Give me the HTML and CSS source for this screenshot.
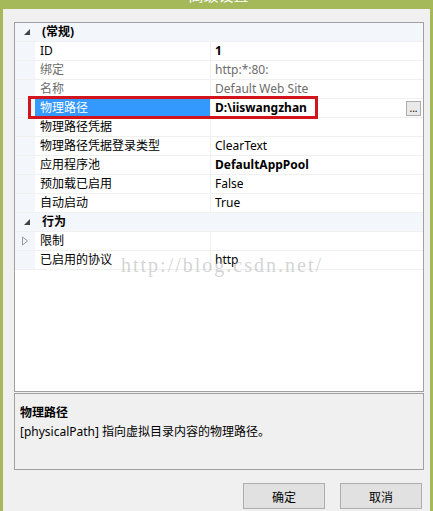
FILE: index.html
```html
<!DOCTYPE html>
<html lang="zh-CN">
<head>
    <meta charset="UTF-8">
    <title>高级设置</title>
    <link rel="stylesheet" href="styles.css">
</head>
<body>
    <div class="titlebar"><span class="title">高级设置</span></div>

    <div class="dialog">
        <div class="grid">
            <div class="row category">
                <span class="gutter"><svg width="8" height="8" viewBox="0 0 8 8"><path d="M7 1 L7 7 L1 7 Z" fill="#444"/></svg></span>
                <span class="name">(常规)</span>
            </div>
            <div class="row">
                <span class="gutter"></span><span class="name">ID</span><span class="value bold">1</span>
            </div>
            <div class="row disabled">
                <span class="gutter"></span><span class="name">绑定</span><span class="value">http:*:80:</span>
            </div>
            <div class="row disabled">
                <span class="gutter"></span><span class="name">名称</span><span class="value">Default Web Site</span>
            </div>
            <div class="row selected">
                <span class="gutter"></span><span class="name">物理路径</span>
                <span class="value bold">D:\iiswangzhan<button class="dots">...</button></span>
            </div>
            <div class="row">
                <span class="gutter"></span><span class="name">物理路径凭据</span><span class="value"></span>
            </div>
            <div class="row">
                <span class="gutter"></span><span class="name">物理路径凭据登录类型</span><span class="value">ClearText</span>
            </div>
            <div class="row">
                <span class="gutter"></span><span class="name">应用程序池</span><span class="value bold">DefaultAppPool</span>
            </div>
            <div class="row">
                <span class="gutter"></span><span class="name">预加载已启用</span><span class="value">False</span>
            </div>
            <div class="row">
                <span class="gutter"></span><span class="name">自动启动</span><span class="value">True</span>
            </div>
            <div class="row category">
                <span class="gutter"><svg width="8" height="8" viewBox="0 0 8 8"><path d="M7 1 L7 7 L1 7 Z" fill="#444"/></svg></span>
                <span class="name">行为</span>
            </div>
            <div class="row">
                <span class="gutter"><svg width="8" height="10" viewBox="0 0 8 10"><path d="M1.5 1 L6.5 5 L1.5 9 Z" fill="none" stroke="#999"/></svg></span>
                <span class="name">限制</span><span class="value"></span>
            </div>
            <div class="row">
                <span class="gutter"></span><span class="name">已启用的协议</span><span class="value">http</span>
            </div>

            <!-- annotation over the selected row -->
            <div class="highlight"></div>
            <div class="watermark">http://blog.csdn.net/</div>
        </div>

        <div class="description">
            <div class="desc-title">物理路径</div>
            <div class="desc-text">[physicalPath] 指向虚拟目录内容的物理路径。</div>
        </div>

        <div class="actions">
            <button class="btn">确定</button>
            <button class="btn">取消</button>
        </div>
    </div>
</body>
</html>
```

FILE: styles.css
```css
body {
    margin: 0;
    background: #a5b95b;
    font-family: "Segoe UI", "Noto Sans", "Noto Sans CJK SC", sans-serif;
    font-size: 12px;
    color: #000;
    height: 511px;
    overflow: hidden;
}

.titlebar {
    height: 9px;
    overflow: hidden;
    text-align: center;
}

.title {
    display: block;
    color: #fff;
    font-size: 15px;
    line-height: 15px;
    margin-top: -12px;
    padding-left: 4px;
}

.dialog {
    background: #f0f0f0;
    margin: 0 3px;
    height: 502px;
    padding: 13px 6px 0 11px;
    box-sizing: border-box;
}

.grid {
    position: relative;
    height: 370px;
    border: 1px solid #a0a0a0;
    background: #fff;
    box-sizing: border-box;
}

.row {
    display: flex;
    height: 19px;
    line-height: 18px;
    border-bottom: 1px solid #f0f0f0;
    box-sizing: border-box;
}

.gutter {
    width: 20px;
    flex: none;
    background: #f3f6fb;
    display: flex;
    align-items: center;
    justify-content: center;
}

.name {
    width: 175px;
    flex: none;
    padding-left: 5px;
    box-sizing: border-box;
    white-space: nowrap;
}

.value {
    flex: 1;
    padding-left: 4px;
    border-left: 1px solid #f0f0f0;
    display: flex;
    align-items: center;
    white-space: nowrap;
}

.bold {
    font-weight: bold;
}

.category {
    background: #f3f6fb;
    font-weight: bold;
}

.category .gutter {
    padding-left: 2px;
}

.disabled {
    color: #6d6d6d;
}

.selected .name {
    background: #3399ff;
    color: #fff;
}

.dots {
    margin-left: auto;
    margin-right: 2px;
    width: 15px;
    height: 15px;
    padding: 0;
    border: 1px solid #acacac;
    background: #e9e9e9;
    font-size: 10px;
    line-height: 10px;
    font-family: "Segoe UI", "Noto Sans", sans-serif;
}

.highlight {
    position: absolute;
    left: 13px;
    top: 73px;
    width: 290px;
    height: 23px;
    border: 3px solid #d4141c;
    box-sizing: border-box;
    pointer-events: none;
}

.watermark {
    position: absolute;
    left: 106px;
    top: 231px;
    font-family: "Liberation Serif", serif;
    font-size: 20px;
    letter-spacing: 2px;
    color: rgba(170, 170, 170, 0.5);
    pointer-events: none;
}

.description {
    margin-top: 1px;
    height: 77px;
    border: 1px solid #a0a0a0;
    box-sizing: border-box;
    padding: 10px 5px;
}

.desc-title {
    font-weight: bold;
    line-height: 17px;
}

.desc-text {
    line-height: 17px;
    margin-top: 2px;
}

.actions {
    display: flex;
    justify-content: flex-end;
    gap: 15px;
    margin-top: 13px;
    padding-right: 2px;
}

.btn {
    width: 82px;
    height: 26px;
    border: 1px solid #adadad;
    background: #e1e1e1;
    font-family: "Noto Sans CJK SC", sans-serif;
    font-size: 12px;
    color: #000;
}
```
